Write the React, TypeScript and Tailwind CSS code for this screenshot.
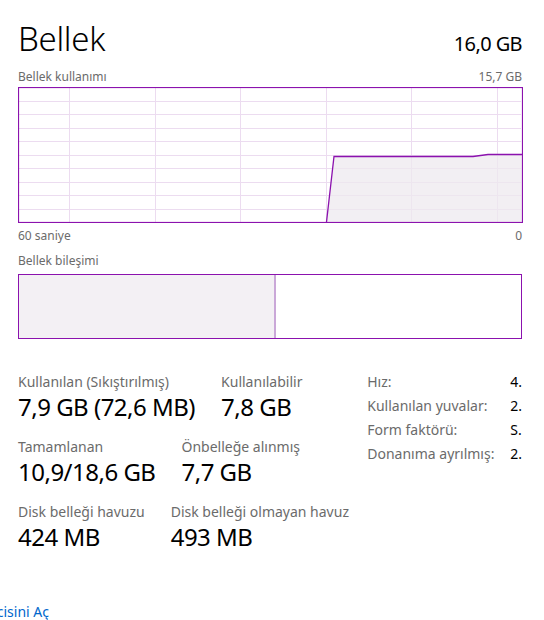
import React from "react";

const W = 504;
const H = 135;

function UsageGraph() {
  const rows = Array.from({ length: 9 }, (_, i) => Math.round(((i + 1) * H) / 10) + 0.5);
  const cols = [51, 137, 222, 308, 393, 479];
  return (
    <svg width={W + 1} height={H + 1} className="block">
      <rect x={0} y={0} width={W + 1} height={H + 1} fill="#ffffff" />
      {rows.map((y, i) => (
        <line key={"r" + i} x1={0} x2={W - 1} y1={y} y2={y} stroke="#ecdcf0" strokeWidth={1} />
      ))}
      {cols.map((x, i) => (
        <line key={"c" + i} x1={x + 0.5} x2={x + 0.5} y1={0} y2={H} stroke="#ecdcf0" strokeWidth={1} />
      ))}
      <polygon
        points={`308.5,${H} 316,69.5 455,69.5 470,67.5 ${W},67.5 ${W},${H}`}
        fill="#eeeaef"
        fillOpacity={0.75}
      />
      <polyline
        points={`308.5,${H} 316,69.5 455,69.5 470,67.5 ${W},67.5`}
        fill="none"
        stroke="#8b12ae"
        strokeWidth={1.3}
      />
      <rect x={0.5} y={0.5} width={W} height={H} fill="none" stroke="#8b12ae" strokeWidth={1.2} />
    </svg>
  );
}

export default function App() {
  return (
    <div className="w-[544px] h-[620px] bg-white overflow-hidden relative font-['Segoe_UI','Noto_Sans',sans-serif] text-black">
      {/* header */}
      <div className="pl-[18px] pr-[22px] pt-[19px] flex items-baseline justify-between">
        <div className="text-[33px] leading-[40px] font-light tracking-[-0.3px]">Bellek</div>
        <div className="text-[20px] leading-[24px] tracking-[-0.6px]">16,0 GB</div>
      </div>

      {/* usage graph */}
      <div className="pl-[18px] pr-[22px] mt-[10px]">
        <div className="flex justify-between text-[12px] leading-[16px] text-[#6b6b6b]">
          <span>Bellek kullanımı</span>
          <span>15,7 GB</span>
        </div>
        <div className="mt-[2px]">
          <UsageGraph />
        </div>
        <div className="flex justify-between text-[12px] leading-[16px] text-[#6b6b6b] mt-[5px]">
          <span>60 saniye</span>
          <span>0</span>
        </div>
        <div className="text-[12px] leading-[16px] text-[#6b6b6b] mt-[9px]">Bellek bileşimi</div>
        <div className="mt-[5px] h-[65px] border border-[#8b12ae] flex">
          <div className="w-[257px] bg-[#f3f0f4] border-r-2 border-[#caa8d8]" />
          <div className="flex-1 bg-white" />
        </div>
      </div>

      {/* stats */}
      <div className="pl-[18px] pr-[22px] mt-[33px] flex">
        <div className="w-[350px] flex flex-col gap-[15px]">
          <div className="flex gap-[26px]">
            <Stat label="Kullanılan (Sıkıştırılmış)" value="7,9 GB (72,6 MB)" />
            <Stat label="Kullanılabilir" value="7,8 GB" />
          </div>
          <div className="flex gap-[26px]">
            <Stat label="Tamamlanan" value="10,9/18,6 GB" />
            <Stat label="Önbelleğe alınmış" value="7,7 GB" />
          </div>
          <div className="flex gap-[26px]">
            <Stat label="Disk belleği havuzu" value="424 MB" />
            <Stat label="Disk belleği olmayan havuz" value="493 MB" />
          </div>
        </div>
        <div className="flex flex-col text-[14px] leading-[24px] -mt-[2px]">
          {[
            ["Hız:", "4."],
            ["Kullanılan yuvalar:", "2."],
            ["Form faktörü:", "S."],
            ["Donanıma ayrılmış:", "2."],
          ].map(([l, v]) => (
            <div key={l} className="flex">
              <span className="w-[143px] text-[#6b6b6b] whitespace-nowrap">{l}</span>
              <span className="text-black">{v}</span>
            </div>
          ))}
        </div>
      </div>

      {/* link */}
      <div className="absolute left-0 top-[602px] w-[49px] overflow-hidden flex justify-end">
        <span className="whitespace-nowrap text-[14px] leading-[20px] text-[#0066cc]">Kaynak İzleyicisini Aç</span>
      </div>
    </div>
  );
}

function Stat({ label, value }: { label: string; value: string }) {
  return (
    <div className="flex flex-col whitespace-nowrap">
      <span className="text-[14px] leading-[20px] text-[#6b6b6b]">{label}</span>
      <span className="text-[24px] leading-[30px] text-black tracking-[-0.5px]">{value}</span>
    </div>
  );
}
